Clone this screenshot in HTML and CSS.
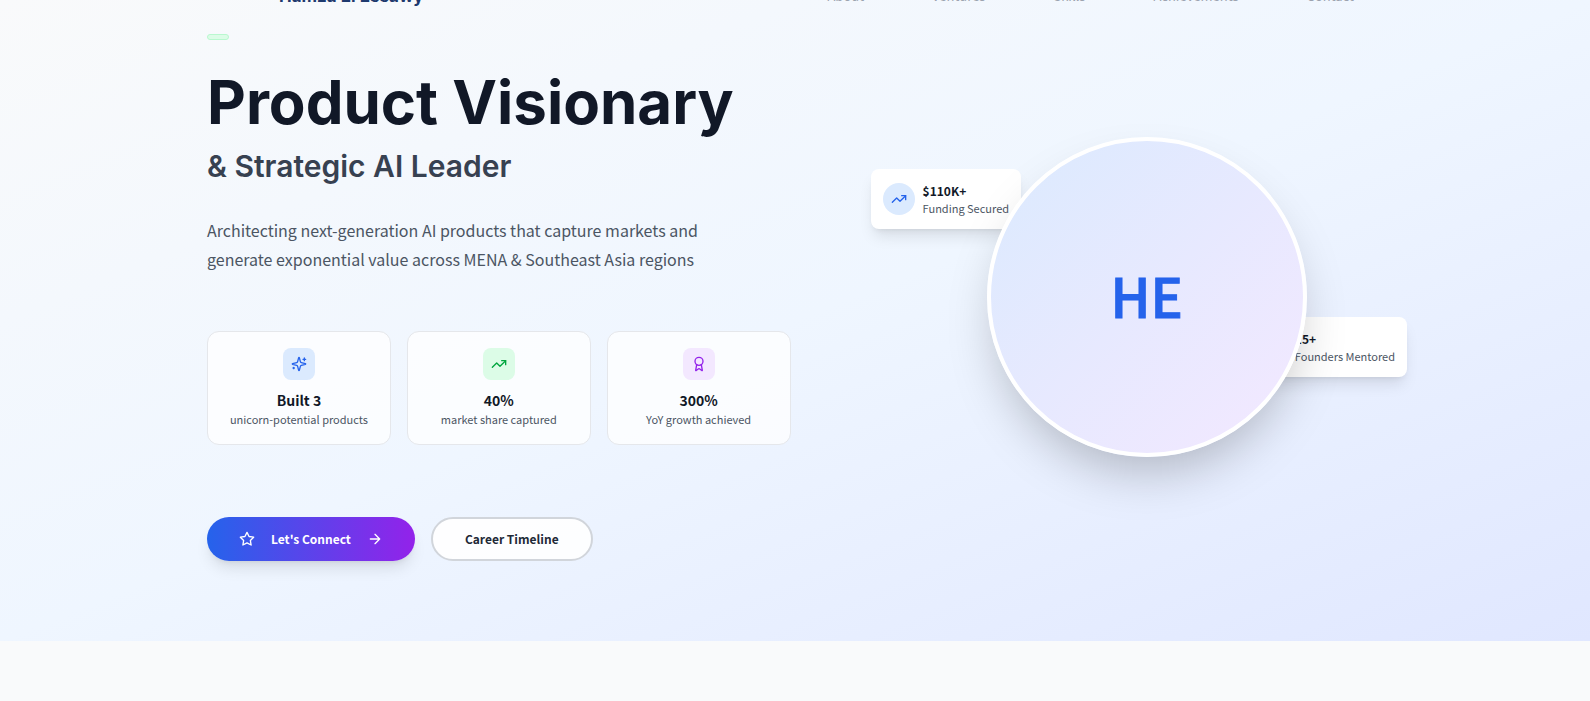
FILE: index.html
```html
<!DOCTYPE html>
<html lang="en">
<head>
<meta charset="utf-8">
<title>Hamza El Essawy</title>
<link rel="stylesheet" href="styles.css">
</head>
<body>
<header class="topbar">
  <a class="brand" href="#home">Hamza El Essawy</a>
  <nav class="menu">
    <a href="#about">About</a>
    <a href="#ventures">Ventures</a>
    <a href="#skills">Skills</a>
    <a href="#achievements">Achievements</a>
    <a href="#contact">Contact</a>
  </nav>
</header>
<main class="hero" id="home">
  <div class="container">
    <section class="intro">
      <span class="badge"></span>
      <h1 class="title">Product Visionary</h1>
      <h2 class="subtitle">&amp; Strategic AI Leader</h2>
      <p class="lead">Architecting next-generation AI products that capture markets and generate exponential value across MENA &amp; Southeast Asia regions</p>
      <ul class="stats">
        <li class="stat">
          <span class="tile blue"><svg class="icon" viewBox="0 0 24 24"><path d="M9.937 15.5A2 2 0 0 0 8.5 14.063l-6.135-1.582a.5.5 0 0 1 0-.962L8.5 9.936A2 2 0 0 0 9.937 8.5l1.582-6.135a.5.5 0 0 1 .963 0L14.063 8.5A2 2 0 0 0 15.5 9.937l6.135 1.581a.5.5 0 0 1 0 .964L15.5 14.063a2 2 0 0 0-1.437 1.437l-1.582 6.135a.5.5 0 0 1-.963 0z"/><path d="M20 3v4M22 5h-4M4 17v2M5 18H3"/></svg></span>
          <strong class="value">Built 3</strong>
          <span class="label">unicorn-potential products</span>
        </li>
        <li class="stat">
          <span class="tile green"><svg class="icon" viewBox="0 0 24 24"><path d="M22 7l-8.500 8.500-5-5L2 17"/><path d="M16 7h6v6"/></svg></span>
          <strong class="value">40%</strong>
          <span class="label">market share captured</span>
        </li>
        <li class="stat">
          <span class="tile purple"><svg class="icon" viewBox="0 0 24 24"><path d="m15.477 12.890 1.515 8.526a.5.5 0 0 1-.81.470l-3.580-2.687a1 1 0 0 0-1.197 0l-3.586 2.686a.5.5 0 0 1-.810-.469l1.514-8.526"/><circle cx="12" cy="8" r="6"/></svg></span>
          <strong class="value">300%</strong>
          <span class="label">YoY growth achieved</span>
        </li>
      </ul>
      <div class="actions">
        <button class="btn primary" type="button">
          <svg class="icon" viewBox="0 0 24 24"><path d="M12 2l3.090 6.260L22 9.270l-5 4.870 1.180 6.880L12 17.770l-6.180 3.250L7 14.140 2 9.270l6.910-1.010z"/></svg>
          Let's Connect
          <svg class="icon" viewBox="0 0 24 24"><path d="M5 12h14M12 5l7 7-7 7"/></svg>
        </button>
        <button class="btn outline" type="button">Career Timeline</button>
      </div>
    </section>
    <section class="portrait">
      <div class="floating funding">
        <span class="dot blue"><svg class="icon" viewBox="0 0 24 24"><path d="M22 7l-8.500 8.500-5-5L2 17"/><path d="M16 7h6v6"/></svg></span>
        <div class="fact"><strong>$110K+</strong><span>Funding Secured</span></div>
      </div>
      <div class="floating founders">
        <span class="dot green"></span>
        <div class="fact"><strong>15+</strong><span>Founders Mentored</span></div>
      </div>
      <div class="avatar">HE</div>
    </section>
  </div>
</main>
</body>
</html>
```
FILE: styles.css
```css
* { box-sizing: border-box; }
body {
  margin: 0;
  background: #f9fafb;
  color: #111827;
  font-family: "Noto Sans CJK SC", sans-serif;
}
h1, h2, p, ul { margin: 0; padding: 0; }
.icon {
  width: 16px;
  height: 16px;
  fill: none;
  stroke: currentColor;
  stroke-width: 2;
  stroke-linecap: round;
  stroke-linejoin: round;
}
.topbar {
  position: absolute;
  top: -18px;
  left: 0;
  right: 0;
  display: flex;
  justify-content: space-between;
  padding: 0 236px 0 279px;
}
.topbar a { text-decoration: none; }
.brand { color: #1e3a6e; font: 700 17px/28px Inter, sans-serif; }
.menu { display: flex; gap: 68px; font-size: 13px; line-height: 27px; }
.menu a { color: #9ca3af; }
.hero {
  padding: 34px 24px 80px;
  background: linear-gradient(to bottom right, #f9fafb 0%, #eff6ff 50%, #e0e7ff 100%);
}
.container {
  display: grid;
  grid-template-columns: 21fr 17fr;
  gap: 120px;
  max-width: 1176px;
  margin: 0 auto;
}
.badge {
  display: block;
  width: 22px;
  height: 6px;
  border: 1px solid #b9f8cf;
  border-radius: 4px;
  background: #dcfce7;
}
.title { margin-top: 24px; font: 700 60px/76px Inter, sans-serif; white-space: nowrap; }
.subtitle { margin-top: 8px; color: #374151; font: 600 30px/36px Inter, sans-serif; }
.lead { max-width: 520px; margin-top: 32px; color: #4b5563; font-size: 16px; line-height: 29px; }
.stats {
  display: grid;
  grid-template-columns: repeat(3, 1fr);
  gap: 16px;
  margin-top: 57px;
  list-style: none;
}
.stat {
  display: flex;
  flex-direction: column;
  align-items: center;
  padding: 16px 16px 18px;
  border: 1px solid #e5e7eb;
  border-radius: 12px;
  background: rgba(255, 255, 255, 0.75);
}
.tile {
  display: grid;
  place-items: center;
  width: 32px;
  height: 32px;
  border-radius: 8px;
}
.blue { background: #dbeafe; color: #2563eb; }
.green { background: #dcfce7; color: #00a63e; }
.purple { background: #f3e8ff; color: #9322ea; }
.value { margin-top: 8px; font-size: 14px; font-weight: 700; line-height: 24px; }
.label { color: #4b5563; font-size: 11px; line-height: 14px; white-space: nowrap; }
.actions { display: flex; gap: 16px; margin-top: 72px; }
.btn {
  display: flex;
  align-items: center;
  height: 44px;
  padding: 0 32px;
  border: 0;
  border-radius: 22px;
  font: 700 12px/20px "Noto Sans CJK SC", sans-serif;
}
.primary {
  gap: 16px;
  background: linear-gradient(90deg, #2563eb, #9322ea);
  color: #fff;
  box-shadow: 0 10px 15px -3px rgba(0, 0, 0, 0.1), 0 4px 6px -4px rgba(0, 0, 0, 0.1);
}
.outline { border: 2px solid #d1d5db; background: rgba(255, 255, 255, 0.9); color: #1f2937; }
.portrait {
  position: relative;
  display: flex;
  justify-content: center;
  align-items: center;
  padding-bottom: 2px;
}
.avatar {
  position: relative;
  display: grid;
  place-items: center;
  width: 320px;
  height: 320px;
  padding-bottom: 4px;
  border: 4px solid #fff;
  border-radius: 50%;
  background: linear-gradient(135deg, #dbeafe, #f3e8ff);
  box-shadow: 0 25px 50px -12px rgba(0, 0, 0, 0.25);
  color: #2563eb;
  font-size: 54px;
  font-weight: 500;
  -webkit-text-stroke: 1px currentColor;
}
.floating {
  position: absolute;
  display: flex;
  align-items: center;
  gap: 8px;
  padding: 12px;
  border-radius: 8px;
  background: #fff;
  box-shadow: 0 10px 15px -3px rgba(0, 0, 0, 0.1), 0 4px 6px -4px rgba(0, 0, 0, 0.1);
  white-space: nowrap;
}
.funding { left: -40px; top: 135px; }
.founders { right: -24px; top: 283px; }
.dot { display: grid; place-items: center; width: 32px; height: 32px; border-radius: 50%; }
.fact { display: flex; flex-direction: column; padding-bottom: 2px; }
.fact strong { font-size: 12px; font-weight: 700; line-height: 20px; }
.fact span { color: #4b5563; font-size: 11px; line-height: 14px; }
```
